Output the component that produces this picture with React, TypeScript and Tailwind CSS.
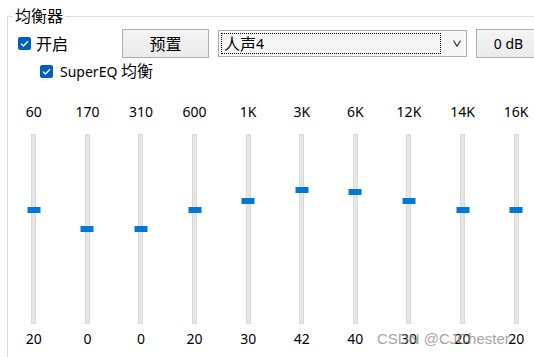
import React from "react";

const bands = [
  { freq: "60", value: 20 },
  { freq: "170", value: 0 },
  { freq: "310", value: 0 },
  { freq: "600", value: 20 },
  { freq: "1K", value: 30 },
  { freq: "3K", value: 42 },
  { freq: "6K", value: 40 },
  { freq: "12K", value: 30 },
  { freq: "14K", value: 20 },
  { freq: "16K", value: 20 },
];

const Check = () => (
  <span className="flex h-[13px] w-[13px] shrink-0 items-center justify-center rounded-[2px] bg-[#005fb8]">
    <svg width="9" height="7" viewBox="0 0 9 7" fill="none">
      <path d="M1 3.6 L3.4 6 L8 1.2" stroke="white" strokeWidth="1.3" />
    </svg>
  </span>
);

const Slider = ({ freq, value }: { freq: string; value: number }) => {
  // thumb offset inside the track, 0 sits at the middle
  const top = 91 - value * 0.935;
  return (
    <div className="flex w-[53.6px] shrink-0 flex-col items-center">
      <span className="leading-[24px]">{freq}</span>
      <div className="relative mt-[10px] h-[190px] w-[5px] border border-[#d9d9d9] bg-[#e6e6e6]">
        <div
          className="absolute left-1/2 h-[6px] w-[13px] -translate-x-1/2 bg-[#0078d7]"
          style={{ top }}
        />
      </div>
      <span className="mt-[3px] leading-[24px]">{value}</span>
    </div>
  );
};

export default function App() {
  return (
    <div
      className="relative h-[357px] w-[534px] overflow-hidden bg-white text-[14px] text-black"
      style={{ fontFamily: '"Noto Sans", "Noto Sans CJK SC", sans-serif' }}
    >
      <div className="relative ml-[7px] mt-[16px] h-[400px] border-l border-t border-[#dcdcdc]">
        <span className="absolute left-[5px] top-[-12px] bg-white px-[2px] text-[16px] leading-[22px]">
          均衡器
        </span>

        <div className="mt-[12px] flex h-[29px] items-center">
          <label className="flex w-[114px] shrink-0 items-center gap-[5px] pl-[10px]">
            <Check />
            <span className="text-[16px] leading-[22px]">开启</span>
          </label>
          <button className="flex h-[29px] w-[87px] shrink-0 items-center justify-center border border-[#adadad] bg-gradient-to-b from-[#f4f4f4] to-[#ebebeb]">
            <span className="text-[16px] leading-[22px]">预置</span>
          </button>
          <div className="ml-[9px] flex h-[27px] w-[249px] shrink-0 items-center border border-[#acacac] bg-[#f7f7f7] p-[2px]">
            <div className="flex h-full w-[220px] shrink-0 items-center border border-dotted border-black pl-[2px]">
              <span className="text-[16px] leading-[20px]">人声</span>
              <span className="leading-[20px]">4</span>
            </div>
            <svg className="ml-[12px]" width="8" height="7" viewBox="0 0 8 7" fill="none">
              <path d="M0.5 0.5 L4 6.3 L7.5 0.5" stroke="#333" strokeWidth="1.2" />
            </svg>
          </div>
          <button className="ml-[9px] flex h-[29px] w-[65px] shrink-0 items-center justify-center border border-[#adadad] bg-gradient-to-b from-[#f4f4f4] to-[#ebebeb]">
            0 dB
          </button>
        </div>

        <label className="mt-[2px] flex items-center gap-[7px] pl-[32px]">
          <Check />
          <span className="leading-[22px]">
            SuperEQ <span className="text-[16px]">均衡</span>
          </span>
        </label>
      </div>

      <div className="absolute left-[7px] top-[100px] flex">
        {bands.map((b) => (
          <Slider key={b.freq} freq={b.freq} value={b.value} />
        ))}
      </div>

      <span
        className="absolute left-[377px] top-[329px] text-[15px] leading-[20px] text-[#8a8a8a]/80"
        style={{ fontFamily: '"Liberation Sans", Arial, sans-serif' }}
      >
        CSDN @CJChester
      </span>
    </div>
  );
}
